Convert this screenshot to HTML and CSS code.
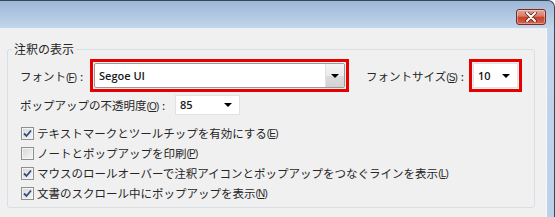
FILE: index.html
```html
<!DOCTYPE html>
<html lang="ja">
<head>
 <meta charset="UTF-8" />
 <title>注釈の表示</title>
 <link rel="stylesheet" href="styles.css">
</head>
<body>
 <div class="window">
   <div class="titlebar">
     <span class="close-btn">
       <svg width="12" height="10" viewBox="0 0 12 10">
         <path d="M2 1 L10 9 M10 1 L2 9" stroke="#5a1a10" stroke-width="3.4" stroke-linecap="round"/>
         <path d="M2 1 L10 9 M10 1 L2 9" stroke="#fff" stroke-width="2" stroke-linecap="round"/>
       </svg>
     </span>
   </div>

   <div class="client">
     <fieldset class="group">
       <legend>注釈の表示</legend>

       <!-- font row -->
       <div class="row row-font">
         <span class="label label-font">フォント<span class="key">(<u>F</u>)</span> :</span>
         <div class="mark mark-font">
           <div class="combo combo-font">
             <span class="value">Segoe UI</span>
             <span class="drop"><i class="arrow"></i></span>
           </div>
         </div>
         <span class="label label-size">フォントサイズ<span class="key">(<u>S</u>)</span> :</span>
         <div class="mark mark-size">
           <div class="combo combo-small">
             <span class="value">10</span>
             <i class="arrow"></i>
           </div>
         </div>
       </div>

       <!-- opacity row -->
       <div class="row row-opacity">
         <span class="label label-opacity">ポップアップの不透明度<span class="key">(<u>O</u>)</span> :</span>
         <div class="combo combo-small combo-opacity">
           <span class="value">85</span>
           <i class="arrow"></i>
         </div>
       </div>

       <ul class="checks">
         <li><span class="check on"></span>テキストマークとツールチップを有効にする<span class="key">(<u>E</u>)</span></li>
         <li><span class="check"></span>ノートとポップアップを印刷<span class="key">(<u>P</u>)</span></li>
         <li><span class="check on"></span>マウスのロールオーバーで注釈アイコンとポップアップをつなぐラインを表示<span class="key">(<u>L</u>)</span></li>
         <li><span class="check on"></span>文書のスクロール中にポップアップを表示<span class="key">(<u>N</u>)</span></li>
       </ul>
     </fieldset>
   </div>
 </div>
</body>
</html>
```

FILE: styles.css
```css
* {
  margin: 0;
  padding: 0;
  box-sizing: border-box;
}

body {
  font-family: "Noto Sans CJK JP", sans-serif;
  font-size: 11.5px;
  color: #262626;
  background: #fff;
}

.window {
  width: 555px;
  height: 217px;
  overflow: hidden;
  display: flex;
  flex-direction: column;
  border-top: 1px solid #3c4755;
  border-right: 1px solid #3c4755;
  border-top-right-radius: 7px;
  background: linear-gradient(to bottom, #9cb7d6 0, #c2d6ec 27px, #bad1ea 100%);
}

.titlebar {
  height: 27px;
  flex: none;
  display: flex;
  justify-content: flex-end;
  align-items: flex-start;
  padding: 8px 8px 0 0;
}

.close-btn {
  width: 30px;
  height: 16px;
  display: flex;
  align-items: center;
  justify-content: center;
  border: 1px solid #7b2b22;
  border-radius: 3px;
  background: linear-gradient(to bottom, #e3a89a 0%, #d87a66 45%, #c3412b 50%, #d4654c 100%);
  box-shadow: inset 0 0 0 1px rgba(255,255,255,0.35);
}

.client {
  flex: 1;
  margin-right: 7px;
  background: #f0f0f0;
  border-right: 1px solid #f8f8f8;
}

.group {
  width: 525px;
  margin: 13px 0 0 7px;
  padding: 0 12px 4px;
  border: 1px solid #d5dfe5;
  border-radius: 3px;
}

.group legend {
  margin-left: -8px;
  padding: 0 2px;
  font-size: 12px;
  line-height: 16px;
}

.row {
  display: flex;
  align-items: center;
}

.row-font {
  height: 33px;
  margin-top: 2px;
}

.row-opacity {
  height: 21px;
  margin-top: 2px;
}

.label {
  flex: none;
  white-space: nowrap;
}

.label-font {
  width: 70px;
}

.label-size {
  width: 103px;
  margin-left: 17px;
}

.label-opacity {
  width: 155px;
}

.key {
  font-family: "Liberation Sans", sans-serif;
  font-size: 10px;
  letter-spacing: -0.8px;
  padding-right: 1px;
}

.mark {
  flex: none;
  height: 33px;
  border: 3px solid #e60000;
  padding: 1px;
}

.mark-font {
  width: 259px;
}

.mark-size {
  width: 53px;
}

.combo {
  height: 25px;
  display: flex;
  align-items: center;
  background: #fff;
  font-family: "Open Sans", sans-serif;
  font-weight: 600;
  font-size: 11px;
  color: #1a1a1a;
}

.combo .value {
  flex: 1;
  padding-left: 4px;
}

.combo-font {
  border: 1px solid #9a9a9a;
  border-radius: 2px;
}

.combo-font .drop {
  width: 19px;
  height: 100%;
  display: flex;
  align-items: center;
  justify-content: center;
  border-left: 1px solid #e0e0e0;
  background: linear-gradient(to bottom, #f4f4f4 0%, #ebebeb 50%, #dcdcdc 51%, #d3d3d3 100%);
}

.combo-small {
  border: 1px solid #e2e2e2;
  padding-right: 7px;
}

.combo-opacity {
  width: 65px;
  height: 20px;
}

.arrow {
  width: 0;
  height: 0;
  border-left: 4px solid transparent;
  border-right: 4px solid transparent;
  border-top: 4px solid #000;
}

.checks {
  list-style: none;
  margin-top: 8px;
}

.checks li {
  height: 20px;
  display: flex;
  align-items: center;
  white-space: nowrap;
}

.check {
  flex: none;
  width: 13px;
  height: 13px;
  margin: 0 3px 0 1px;
  border: 1px solid #8e8f8f;
  background: linear-gradient(135deg, #d6d6d6 0%, #f6f6f6 100%);
  box-shadow: inset 0 0 0 1px #f4f4f4;
}

.check.on {
  background: url("data:image/svg+xml;utf8,<svg xmlns='http://www.w3.org/2000/svg' width='11' height='11'><path d='M2 5.5 L4.5 8 L9 2.5' fill='none' stroke='%23354d80' stroke-width='1.8'/></svg>") center no-repeat,
              linear-gradient(135deg, #d6d6d6 0%, #f6f6f6 100%);
}
```
